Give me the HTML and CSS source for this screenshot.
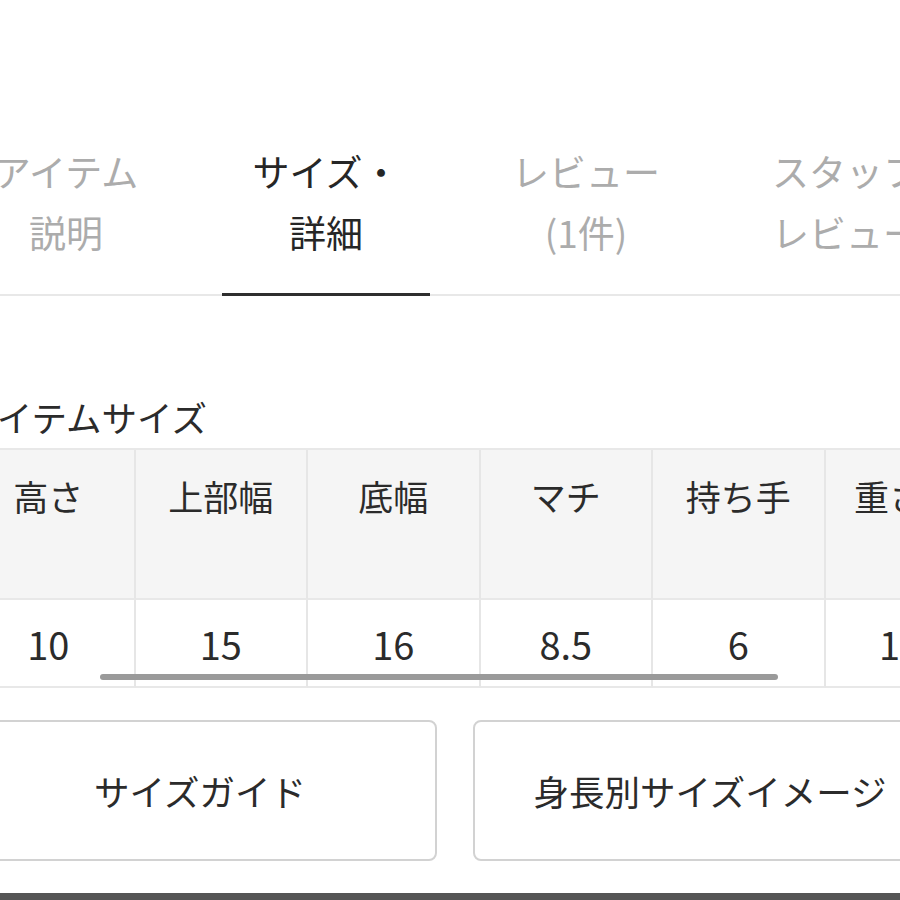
FILE: index.html
```html
<!DOCTYPE html>
<html lang="ja">
<head>
<meta charset="utf-8">
<title>サイズ・詳細</title>
<link rel="stylesheet" href="styles.css">
</head>
<body>
<div class="page">
  <nav class="tabs">
    <div class="tab">アイテム<br>説明</div>
    <div class="tab active">サイズ・<br>詳細</div>
    <div class="tab">レビュー<br>(1件)</div>
    <div class="tab">スタッフ<br>レビュー</div>
  </nav>

  <h2 class="title">アイテムサイズ</h2>

  <div class="table-wrap">
    <table class="size-table">
      <thead>
        <tr>
          <th>高さ</th>
          <th>上部幅</th>
          <th>底幅</th>
          <th>マチ</th>
          <th>持ち手</th>
          <th>重さ(g)</th>
        </tr>
      </thead>
      <tbody>
        <tr>
          <td>10</td>
          <td>15</td>
          <td>16</td>
          <td>8.5</td>
          <td>6</td>
          <td>140</td>
        </tr>
      </tbody>
    </table>
    <div class="scrollbar"></div>
  </div>

  <div class="buttons">
    <button class="btn">サイズガイド</button>
    <button class="btn">身長別サイズイメージ</button>
  </div>

  <div class="bottom-bar"></div>
</div>
</body>
</html>
```

FILE: styles.css
```css
html, body {
  margin: 0;
  padding: 0;
  background: #ffffff;
  overflow: hidden;
}

body {
  width: 900px;
  height: 900px;
  font-family: "Noto Sans CJK JP", "Noto Sans", sans-serif;
  color: #333333;
}

.page {
  margin-left: -37px;
  width: 1000px;
}

.tabs {
  display: flex;
  margin-left: -27px;
  padding-top: 141px;
  border-bottom: 2px solid #e8e8e8;
}

.tab {
  flex: none;
  width: 260px;
  position: relative;
  text-align: center;
  font-size: 37px;
  line-height: 61px;
  color: #acacac;
  padding-bottom: 31px;
}

.tab.active {
  color: #262626;
}

.tab.active::after {
  content: "";
  position: absolute;
  left: 26px;
  right: 26px;
  bottom: -2px;
  height: 3px;
  background: #2e2e2e;
}

.title {
  margin: 97px 0 7px 0;
  font-size: 35.5px;
  line-height: 48px;
  font-weight: normal;
  color: #2b2b2b;
}

.table-wrap {
  position: relative;
}

.size-table {
  table-layout: fixed;
  width: 1035px;
  border-collapse: separate;
  border-spacing: 0;
  border-top: 2px solid #e8e8e8;
}

.size-table th,
.size-table td {
  width: 172.5px;
  box-sizing: border-box;
  text-align: center;
  font-size: 35px;
  line-height: 48px;
  font-weight: normal;
  color: #2b2b2b;
  border-right: 2px solid #e6e6e6;
  border-bottom: 2px solid #e8e8e8;
  vertical-align: top;
}

.size-table th {
  background: #f5f5f5;
  height: 150px;
  padding: 22px 0 78px 0;
}

.size-table td {
  background: #ffffff;
  height: 88px;
  padding: 20px 0 18px 0;
  font-size: 38px;
}

.scrollbar {
  position: absolute;
  top: 226px;
  left: 137px;
  width: 678px;
  height: 6px;
  border-radius: 3px;
  background: #9a9a9a;
}

.buttons {
  display: flex;
  gap: 36px;
  margin-top: 32px;
}

.btn {
  flex: none;
  width: 474px;
  height: 141px;
  box-sizing: border-box;
  border: 2px solid #d2d2d2;
  border-radius: 8px;
  background: #ffffff;
  font-family: "Noto Sans CJK JP", "Noto Sans", sans-serif;
  font-size: 35.5px;
  color: #2b2b2b;
  padding: 0;
}

.bottom-bar {
  margin-top: 32px;
  height: 7px;
  background: #555555;
}
```
